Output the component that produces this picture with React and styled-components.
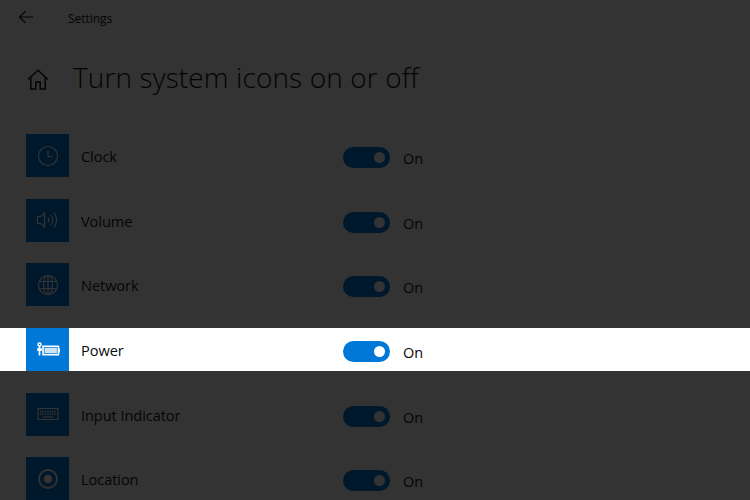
import React from "react";
import styled, { createGlobalStyle } from "styled-components";

const Global = createGlobalStyle`
  html, body { margin: 0; padding: 0; width: 750px; height: 500px; overflow: hidden; background: #333333; }
  #root { width: 750px; height: 500px; overflow: hidden; }
`;

const Page = styled.div`
  width: 750px;
  height: 500px;
  overflow: hidden;
  background: #333333;
  color: #050505;
  font-family: "Open Sans", "Noto Sans", sans-serif;
`;

const TopBar = styled.header`
  display: flex;
  align-items: center;
  height: 36px;
  padding-left: 18px;
`;

const BackIcon = styled.svg`
  width: 16px;
  height: 14px;
  margin-right: 34px;
  margin-top: -2px;
`;

const AppName = styled.span`
  font-size: 12px;
  letter-spacing: -0.05px;
  color: #050505;
`;

const Heading = styled.div`
  display: flex;
  align-items: center;
  height: 44px;
  margin-top: 19px;
  padding-left: 27px;
`;

const HomeIcon = styled.svg`
  width: 22px;
  height: 21px;
  margin-right: 24px;
  margin-top: 5px;
`;

const Title = styled.h1`
  margin: 0;
  font-size: 28px;
  font-weight: 300;
  letter-spacing: 0.12px;
  white-space: nowrap;
  color: #030303;
`;

const List = styled.div`
  display: flex;
  flex-direction: column;
  gap: 21.7px;
  margin-top: 35px;
`;

const Row = styled.div`
  display: flex;
  align-items: center;
  height: 43px;
  padding-left: 26px;
  background: ${(p) => (p.$active ? "#ffffff" : "transparent")};
`;

const Tile = styled.div`
  display: flex;
  align-items: center;
  justify-content: center;
  flex: none;
  width: 43px;
  height: 43px;
  background: ${(p) => (p.$active ? "#0078d7" : "#00182b")};
  color: ${(p) => (p.$active ? "#ffffff" : "#333333")};
`;

const Label = styled.span`
  flex: none;
  width: 262px;
  margin-left: 12px;
  margin-top: 1px;
  font-size: 14.6px;
  letter-spacing: -0.08px;
  color: ${(p) => (p.$active ? "#0a0a0a" : "#050505")};
`;

const Track = styled.div`
  display: flex;
  align-items: center;
  justify-content: flex-end;
  flex: none;
  width: 47px;
  height: 21px;
  margin-top: 4px;
  padding-right: 5px;
  box-sizing: border-box;
  border-radius: 11px;
  background: ${(p) => (p.$active ? "#0078d7" : "#00182b")};
`;

const Knob = styled.div`
  width: 11px;
  height: 11px;
  border-radius: 50%;
  background: ${(p) => (p.$active ? "#ffffff" : "#333333")};
`;

const State = styled.span`
  margin-left: 13px;
  margin-top: 6px;
  font-size: 14.5px;
  color: ${(p) => (p.$active ? "#0a0a0a" : "#050505")};
`;

const Glyph = styled.svg`
  width: 24px;
  height: 24px;
  fill: none;
  stroke: currentColor;
  stroke-width: 1.2;
`;

const ClockGlyph = () => (
  <Glyph viewBox="0 0 24 24">
    <circle cx="12" cy="12" r="9.5" />
    <path d="M12 6.5v6h4.5" />
  </Glyph>
);
const VolumeGlyph = () => (
  <Glyph viewBox="0 0 24 24">
    <path d="M1.5 8.5h3.5l3.5-3.5v14L5 15.5H1.5z" />
    <path d="M12 9.5a4 4 0 0 1 0 5" />
    <path d="M15 7a8 8 0 0 1 0 10" />
    <path d="M18 4.5a12 12 0 0 1 0 15" />
  </Glyph>
);
const GlobeGlyph = () => (
  <Glyph viewBox="0 0 24 24">
    <circle cx="12" cy="12" r="9.5" />
    <ellipse cx="12" cy="12" rx="4.5" ry="9.5" />
    <path d="M3.2 8.5h17.6M3.2 15.5h17.6M12 2.5v19" />
  </Glyph>
);
const PowerGlyph = () => (
  <Glyph viewBox="0 0 24 24">
    <circle cx="3.5" cy="6.4" r="1.5" strokeWidth="1.5" />
    <path d="M3.5 8v9.5" strokeWidth="1.7" />
    <path d="M1.2 10.2h4.6v2.8H1.2z" fill="currentColor" stroke="none" />
    <path d="M7 8.2h15.4v8.6H7z" strokeWidth="1.6" />
    <path d="M8.5 9.7h12.4v5.6H8.5z" fill="currentColor" fillOpacity="0.8" stroke="none" />
    <path d="M23.4 10.5v4" strokeWidth="1.3" />
  </Glyph>
);
const KeyboardGlyph = () => (
  <Glyph viewBox="0 0 24 24">
    <path d="M2 6.5h20v11H2z" />
    <path d="M4 9.5h16M4 12h16" strokeDasharray="1.4 1" strokeWidth="1.4" />
    <path d="M7 15h10" strokeWidth="1.2" />
  </Glyph>
);
const LocationGlyph = () => (
  <Glyph viewBox="0 0 24 24">
    <circle cx="12" cy="12" r="9" strokeWidth="1.9" />
    <circle cx="12" cy="12" r="4.2" fill="currentColor" stroke="none" />
  </Glyph>
);

const items = [
  { name: "Clock", Icon: ClockGlyph },
  { name: "Volume", Icon: VolumeGlyph },
  { name: "Network", Icon: GlobeGlyph },
  { name: "Power", Icon: PowerGlyph, active: true },
  { name: "Input Indicator", Icon: KeyboardGlyph },
  { name: "Location", Icon: LocationGlyph },
];

export default function App() {
  return (
    <Page>
      <Global />
      <TopBar>
        <BackIcon viewBox="0 0 16 14" fill="none" stroke="#050505" strokeWidth="1.1">
          <path d="M15 7H1.5M7.5 1 1.5 7l6 6" />
        </BackIcon>
        <AppName>Settings</AppName>
      </TopBar>
      <Heading>
        <HomeIcon viewBox="0 0 22 21" fill="none" stroke="#050505" strokeWidth="1.5">
          <path d="M1 10.5 11 1.2l10 9.3" />
          <path d="M3.8 8.5V20h5v-7h4.4v7h5V8.5" />
        </HomeIcon>
        <Title>Turn system icons on or off</Title>
      </Heading>
      <List>
        {items.map(({ name, Icon, active }) => (
          <Row key={name} $active={active}>
            <Tile $active={active}>
              <Icon />
            </Tile>
            <Label $active={active}>{name}</Label>
            <Track $active={active}>
              <Knob $active={active} />
            </Track>
            <State $active={active}>On</State>
          </Row>
        ))}
      </List>
    </Page>
  );
}
